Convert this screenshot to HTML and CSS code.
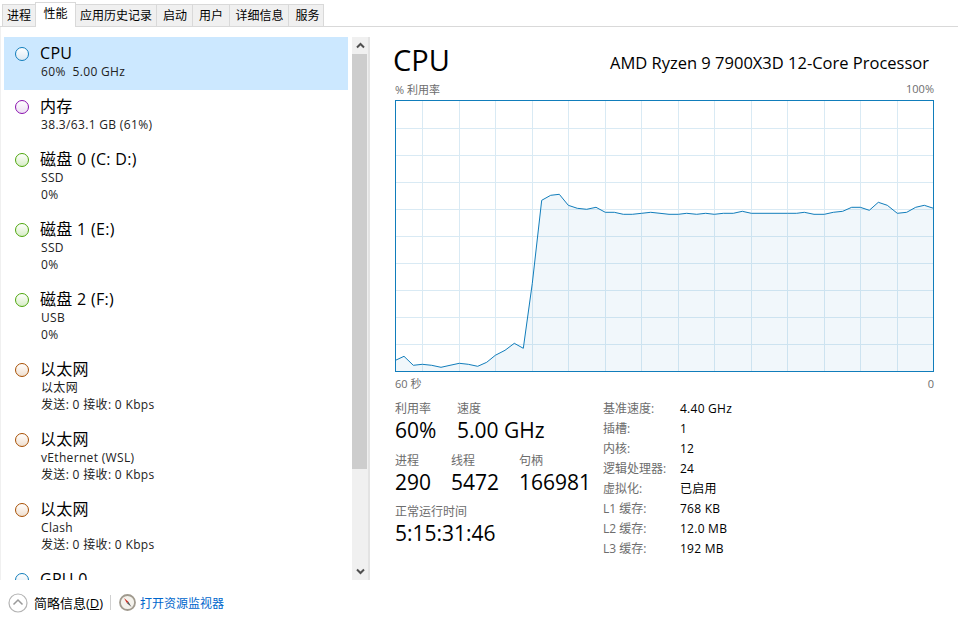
FILE: index.html
```html
<!DOCTYPE html>
<html lang="zh">
<head>
<meta charset="utf-8">
<title>任务管理器</title>
<link rel="stylesheet" href="styles.css">
</head>
<body>
<div class="app">
  <nav class="tabs">
    <span class="tab t-a">进程</span>
    <span class="tab active t-b">性能</span>
    <span class="tab t-c">应用历史记录</span>
    <span class="tab t-d">启动</span>
    <span class="tab t-g">用户</span>
    <span class="tab t-e">详细信息</span>
    <span class="tab t-f">服务</span>
  </nav>
  <main class="main">
    <aside class="side">
      <div class="list">
        <div class="item two selected"><i class="dot blue"></i><div><div class="name">CPU</div><div class="sub">60%&nbsp; 5.00 GHz</div></div></div>
        <div class="item two"><i class="dot purple"></i><div><div class="name">内存</div><div class="sub">38.3/63.1 GB (61%)</div></div></div>
        <div class="item"><i class="dot green"></i><div><div class="name">磁盘 0 (C: D:)</div><div class="sub">SSD</div><div class="sub">0%</div></div></div>
        <div class="item"><i class="dot green"></i><div><div class="name">磁盘 1 (E:)</div><div class="sub">SSD</div><div class="sub">0%</div></div></div>
        <div class="item"><i class="dot green"></i><div><div class="name">磁盘 2 (F:)</div><div class="sub">USB</div><div class="sub">0%</div></div></div>
        <div class="item"><i class="dot brown"></i><div><div class="name">以太网</div><div class="sub">以太网</div><div class="sub">发送: 0 接收: 0 Kbps</div></div></div>
        <div class="item"><i class="dot brown"></i><div><div class="name">以太网</div><div class="sub">vEthernet (WSL)</div><div class="sub">发送: 0 接收: 0 Kbps</div></div></div>
        <div class="item"><i class="dot brown"></i><div><div class="name">以太网</div><div class="sub">Clash</div><div class="sub">发送: 0 接收: 0 Kbps</div></div></div>
        <div class="item two"><i class="dot blue"></i><div><div class="name">GPU 0</div><div class="sub">&nbsp;</div></div></div>
      </div>
      <div class="scroll">
        <div class="sb-btn"><svg width="9" height="7" viewBox="0 0 9 7"><path d="M1 5.500 4.500 2 8 5.500" fill="none" stroke="#505050" stroke-width="2"/></svg></div>
        <div class="sb-track"><div class="sb-thumb"></div></div>
        <div class="sb-btn"><svg width="9" height="7" viewBox="0 0 9 7"><path d="M1 1.500 4.500 5 8 1.500" fill="none" stroke="#505050" stroke-width="2"/></svg></div>
      </div>
    </aside>
    <section class="detail">
      <header class="head">
        <h1 class="title">CPU</h1>
        <div class="model">AMD Ryzen 9 7900X3D 12-Core Processor</div>
      </header>
      <div class="axis"><span>% 利用率</span><span>100%</span></div>
      <svg class="graph" width="539" height="272" viewBox="395 100 539 272">
        <path class="grid" d="M422.500 100V371M459.500 100V371M495.500 100V371M532.500 100V371M568.500 100V371M605.500 100V371M641.500 100V371M678.500 100V371M714.500 100V371M751.500 100V371M787.500 100V371M824.500 100V371M860.500 100V371M897.500 100V371M395 128.500H933M395 155.500H933M395 182.500H933M395 209.500H933M395 236.500H933M395 263.500H933M395 290.500H933M395 317.500H933M395 344.500H933"/>
        <path class="area" d="M395.500 360.300 404 356.300 413.300 365.300 422.300 364.300 431.700 365.300 441 367.300 450 365.300 459.300 363.300 468.300 364.300 477.700 366.300 486.700 362.300 495.300 355.300 505 350.300 514.300 343.300 523.300 348.300 532.300 283.300 541.700 200.300 550.700 195.300 559.300 194.300 568.300 205.300 577.300 208.300 586.700 209.300 596 207.300 605.300 212.300 614.300 212.300 623.300 214.300 632.300 214.300 641.700 213.300 650.700 212.300 660 213.300 669 214.300 678.300 214.300 686.700 213.300 696.700 214.300 705.700 213.300 714.300 214.300 723.300 213.300 733.300 213.300 742.300 211.300 751.300 213.300 760 213.300 787.300 213.300 796.700 213.300 804.300 212.300 814 214.300 824.300 214.300 833.300 212.300 842.700 211.300 851.700 207.300 860.300 207.300 869.300 210.300 878.300 202.300 887.300 205.300 897.300 213.300 906.700 212.300 915.700 207.300 924.300 205.300 933.500 208.300V371H395.500Z"/>
        <path class="line" d="M395.500 360.300 404 356.300 413.300 365.300 422.300 364.300 431.700 365.300 441 367.300 450 365.300 459.300 363.300 468.300 364.300 477.700 366.300 486.700 362.300 495.300 355.300 505 350.300 514.300 343.300 523.300 348.300 532.300 283.300 541.700 200.300 550.700 195.300 559.300 194.300 568.300 205.300 577.300 208.300 586.700 209.300 596 207.300 605.300 212.300 614.300 212.300 623.300 214.300 632.300 214.300 641.700 213.300 650.700 212.300 660 213.300 669 214.300 678.300 214.300 686.700 213.300 696.700 214.300 705.700 213.300 714.300 214.300 723.300 213.300 733.300 213.300 742.300 211.300 751.300 213.300 760 213.300 787.300 213.300 796.700 213.300 804.300 212.300 814 214.300 824.300 214.300 833.300 212.300 842.700 211.300 851.700 207.300 860.300 207.300 869.300 210.300 878.300 202.300 887.300 205.300 897.300 213.300 906.700 212.300 915.700 207.300 924.300 205.300 933.500 208.300"/>
        <rect class="frame" x="395.500" y="100.500" width="538" height="271"/>
      </svg>
      <div class="axis axis-b"><span>60 秒</span><span>0</span></div>
      <div class="stats">
        <div class="live">
          <div class="live-row">
            <div class="cell w62"><div class="lab">利用率</div><div class="val">60%</div></div>
            <div class="cell"><div class="lab">速度</div><div class="val">5.00 GHz</div></div>
          </div>
          <div class="live-row">
            <div class="cell w56"><div class="lab">进程</div><div class="val">290</div></div>
            <div class="cell w68"><div class="lab">线程</div><div class="val">5472</div></div>
            <div class="cell"><div class="lab">句柄</div><div class="val">166981</div></div>
          </div>
          <div class="live-row last">
            <div class="cell"><div class="lab">正常运行时间</div><div class="val">5:15:31:46</div></div>
          </div>
        </div>
        <dl class="specs">
          <dt>基准速度:</dt><dd>4.40 GHz</dd>
          <dt>插槽:</dt><dd>1</dd>
          <dt>内核:</dt><dd>12</dd>
          <dt>逻辑处理器:</dt><dd>24</dd>
          <dt>虚拟化:</dt><dd>已启用</dd>
          <dt>L1 缓存:</dt><dd>768 KB</dd>
          <dt>L2 缓存:</dt><dd>12.0 MB</dd>
          <dt>L3 缓存:</dt><dd>192 MB</dd>
        </dl>
      </div>
    </section>
  </main>
  <footer class="foot">
    <svg class="ico" width="20" height="20" viewBox="0 0 20 20"><circle cx="10" cy="10" r="9" fill="#fff" stroke="#b4b4b4" stroke-width="1.200"/><path d="M5.500 11.500 10 7l4.500 4.500" fill="none" stroke="#9a9a9a" stroke-width="1.500"/></svg>
    <span class="less">简略信息(<u>D</u>)</span>
    <span class="sep"></span>
    <svg class="ico2" width="17" height="17" viewBox="0 0 17 17"><circle cx="8.500" cy="8.500" r="7.500" fill="#f4f2ec" stroke="#a09a8e" stroke-width="1.800"/><path d="M5 4 9.400 7.800 8 9.200Z" fill="#c8281e"/><path d="M8 9.200 9.400 7.800 12.500 13Z" fill="#555"/></svg>
    <span class="link">打开资源监视器</span>
  </footer>
</div>
</body>
</html>
```

FILE: styles.css
```css
* { box-sizing: border-box; }
html, body { margin: 0; padding: 0; background: #fff; }
body { font-family: "Open Sans", "Noto Sans CJK SC", sans-serif; font-size: 12px; color: #000; overflow: hidden; }
.app { width: 958px; height: 628px; display: flex; flex-direction: column; }

.tabs { height: 27px; padding: 2px 0 0 2px; display: flex; align-items: flex-end; border-bottom: 1px solid #d9d9d9; flex: none; }
.tab { height: 22px; line-height: 21px; text-align: center; background: #f0f0f0; border: 1px solid #d9d9d9; border-bottom: 0; border-left-width: 0; }
.tab:first-child { border-left-width: 1px; }
.tab.active { height: 25px; margin-bottom: -1px; background: #fff; line-height: 22px; padding-bottom: 2px; border-left-width: 1px; margin-left: -1px; }
.t-a { width: 34px; }
.t-b { width: 41px; }
.t-c { width: 81px; }
.t-d { width: 36px; padding-left: 1px; }
.t-g { width: 37px; }
.t-e { width: 59px; padding-left: 1px; }
.t-f { width: 35px; padding-left: 3px; }

.main { flex: none; height: 553px; display: flex; }
.side { width: 369px; flex: none; display: flex; border-left: 1px solid #f0f0f0; }
.list { width: 351px; flex: none; padding: 10px 4px 0 3px; overflow: hidden; }
.item { height: 70px; display: flex; padding: 6px 0 0 11px; }
.item.two { height: 53px; }
.selected { background: #cce8ff; }
.dot { flex: none; width: 14px; height: 14px; margin: 4px 11px 0 0; border-radius: 50%; border: 1.500px solid; }
.blue { border-color: #117dbb; background: linear-gradient(#fff, #dbe9f3); }
.purple { border-color: #8b12ae; background: linear-gradient(#fff, #eddff3); }
.green { border-color: #4da60c; background: linear-gradient(#fff, #d8edc6); }
.brown { border-color: #a74f01; background: linear-gradient(#fff, #f0dfcf); }
.name { font-size: 16px; line-height: 20px; letter-spacing: .3px; }
.sub { font-size: 12px; line-height: 17px; color: #222; letter-spacing: .33px; padding-left: 1px; }

.scroll { width: 18px; flex: none; margin-top: 10px; display: flex; flex-direction: column; border-right: 2px solid #e3e3e3; }
.sb-btn { height: 17px; flex: none; background: #f0f0f0; display: flex; align-items: center; justify-content: center; }
.sb-track { flex: 1; background: #f0f0f0; }
.sb-thumb { height: 415px; width: 15px; background: #cdcdcd; }

.detail { width: 539px; flex: none; margin-left: 26px; padding-top: 14px; }
.head { display: flex; justify-content: space-between; align-items: flex-end; height: 37px; padding-right: 5px; }
.title { margin: 0 0 0 -2px; font-size: 29px; font-weight: 400; line-height: 37px; }
.model { font-size: 16.500px; line-height: 22px; padding-bottom: 4px; }
.axis { width: 539px; height: 22px; display: flex; justify-content: space-between; align-items: center; font-size: 11px; color: #6d6d6d; padding-bottom: 1px; }
.axis-b { height: 21px; padding: 1px 0 0; }
.graph { display: block; }
.grid { stroke: #d9eaf4; stroke-width: 1; fill: none; }
.area { fill: #117dbb; fill-opacity: .06; }
.line { fill: none; stroke: #117dbb; stroke-width: 1; }
.frame { fill: none; stroke: #117dbb; stroke-width: 1; }

.stats { display: flex; padding-top: 5px; }
.live { width: 208px; flex: none; padding-top: 2px; }
.live-row { display: flex; height: 52px; }
.live-row.last { margin-top: -1px; }
.w62 { width: 62px; }
.w56 { width: 56px; }
.w68 { width: 68px; }
.lab { font-size: 12px; line-height: 17px; color: #6d6d6d; }
.val { font-size: 21px; line-height: 27px; white-space: nowrap; }
.specs { margin: 0; display: grid; grid-template-columns: 77px auto; grid-auto-rows: 20px; align-items: center; }
.specs dt { color: #6d6d6d; }
.specs dd { margin: 0; letter-spacing: .25px; }

.foot { flex: 1; display: flex; align-items: center; padding: 0 0 3px 8px; }
.ico { flex: none; }
.less { font-size: 13px; margin-left: 6px; width: 76px; white-space: nowrap; }
.sep { width: 1px; height: 15px; background: #d0d0d0; }
.ico2 { flex: none; margin-left: 8px; }
.link { color: #0066cc; margin-left: 4px; }
```
